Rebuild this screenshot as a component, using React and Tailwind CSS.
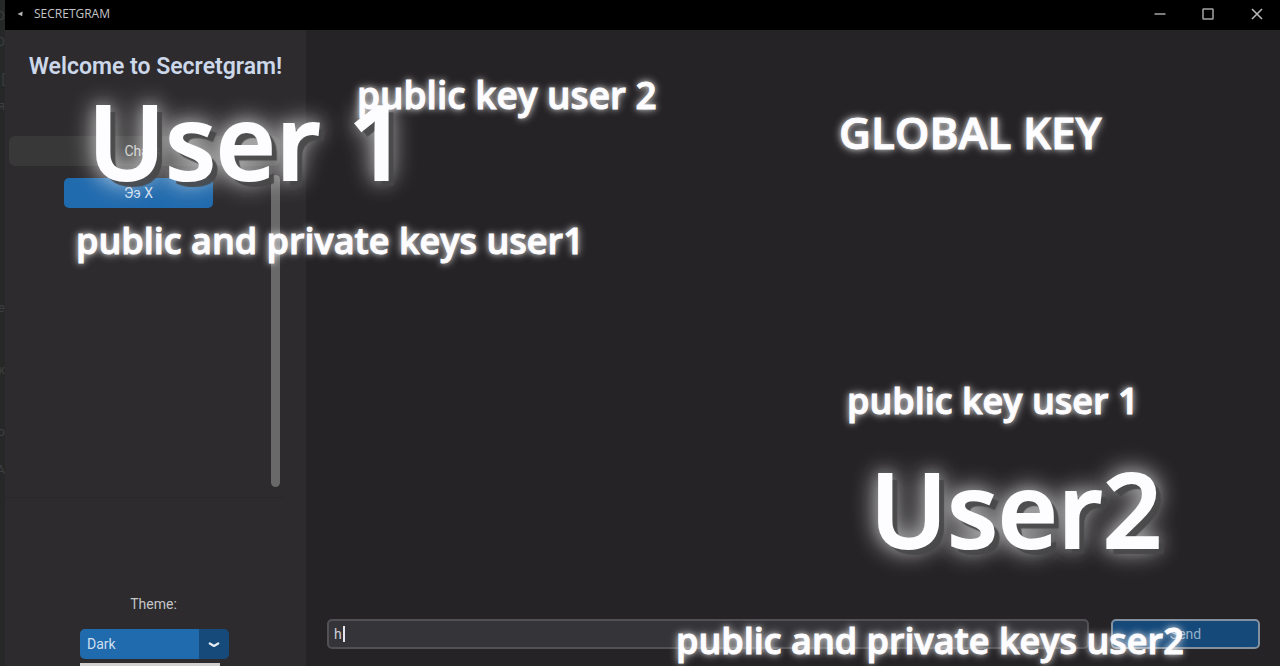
import { useState } from "react";

const backdropLetters = [
  { char: "O", gap: "mt-[8px]" },
  { char: "O", gap: "mt-[10px]" },
  { char: "[", gap: "mt-[22px]" },
  { char: "я", gap: "mt-[10px]" },
  { char: "e", gap: "mt-[186px]" },
  { char: "ж", gap: "mt-[46px]" },
  { char: "o", gap: "mt-[46px]" },
  { char: "A", gap: "mt-[22px]" },
];

function Backdrop() {
  return (
    <div
      aria-hidden="true"
      className="flex w-[5px] shrink-0 flex-col items-end overflow-hidden bg-[#252827] text-[13px] leading-4 text-[#3b3f41]"
    >
      {backdropLetters.map((l, i) => (
        <span key={i} className={l.gap}>{l.char}</span>
      ))}
    </div>
  );
}

function TitleBar() {
  return (
    <header className="flex h-[30px] shrink-0 items-center bg-black pb-[2px] pl-3">
      <svg width="6" height="6" viewBox="0 0 6 6" className="mr-[11px]" aria-hidden="true">
        <path d="M0.5 3 L5.6 0.6 L5.2 5.2 L3.4 4.2 Z" fill="#b8b8b8" />
      </svg>
      <h1 className="flex-1 font-['Open_Sans',sans-serif] text-[12px] leading-4 text-[#c4c4c8]">SECRETGRAM</h1>
      <button aria-label="Minimize" className="flex h-7 w-[44px] items-center justify-center">
        <svg width="12" height="12" viewBox="0 0 12 12" stroke="#9c9c9c" strokeWidth="1.6"><path d="M0.5 6H11.5" /></svg>
      </button>
      <button aria-label="Maximize" className="flex h-7 w-[52px] items-center justify-center">
        <svg width="12" height="12" viewBox="0 0 12 12" fill="none" stroke="#a4a4a4" strokeWidth="1.5"><rect x="1" y="1" width="10" height="10" rx="0.6" /></svg>
      </button>
      <button aria-label="Close" className="flex h-7 w-[46px] items-center justify-center">
        <svg width="12" height="12" viewBox="0 0 12 12" stroke="#bcbcbc" strokeWidth="1.5"><path d="M1 1L11 11M11 1L1 11" /></svg>
      </button>
    </header>
  );
}

function Sidebar({ theme, setTheme }) {
  return (
    <aside className="flex w-[301px] shrink-0 flex-col bg-[#2d2b2d]">
      <h2 className="mt-[25px] whitespace-nowrap text-center text-[23px] font-semibold leading-6 text-[#ccd7ea]">Welcome to Secretgram!</h2>
      <section className="mr-[21px] mt-[51px] flex h-[368px] flex-col border-b border-[#292729] pl-1 pr-[5px]">
        <h3 className="mt-[6px] h-[30px] shrink-0 rounded-md bg-[#383838] pr-1 text-center text-[14px] leading-[30px] text-[#c8c8c8]">
          Chats
        </h3>
        <div className="mt-[9px] flex h-[312px] justify-between">
          <div className="flex flex-1 justify-center pr-[3px]">
            <button className="mt-[3px] h-[30px] w-[149px] rounded-[5px] bg-[#206aae] text-[14px] text-[#cfdfee]">Ээ Х</button>
          </div>
          <div className="w-[9px] rounded-full bg-[#696969]" />
        </div>
      </section>
      <div className="mt-auto flex flex-col">
        <label htmlFor="theme" className="mr-1 self-center text-[14px] leading-4 text-[#c4c6ca]">Theme:</label>
        <div className="ml-[75px] mt-[17px] grid w-[149px] grid-cols-[1fr_30px]">
          <select
            id="theme"
            value={theme}
            onChange={(e) => setTheme(e.target.value)}
            className="col-span-2 col-start-1 row-start-1 h-[30px] appearance-none rounded-[5px] bg-[linear-gradient(to_right,#206aae_119px,#164a7a_119px)] pl-[7px] text-[14px] text-[#cfdfee] outline-none"
          >
            <option>Dark</option>
            <option>Light</option>
            <option>System</option>
          </select>
          <svg width="12" height="8" viewBox="0 0 12 8" className="pointer-events-none col-start-2 row-start-1 self-center justify-self-center" aria-hidden="true">
            <path d="M1.8 3.4L6 5.9L10.2 3.4" fill="none" stroke="#e2ebf3" strokeWidth="2.3" strokeLinecap="round" strokeLinejoin="round" />
          </svg>
        </div>
        <div className="ml-[75px] mt-1 h-[3px] w-[140px] bg-[#d2d0ce]" />
      </div>
    </aside>
  );
}

function Conversation() {
  const [draft, setDraft] = useState("h");
  return (
    <main className="flex min-w-0 flex-1 flex-col bg-[#252326]">
      <div className="flex-1" />
      <form className="mb-[17px] ml-[21px] mr-5 flex gap-[22px]" onSubmit={(e) => e.preventDefault()}>
        <div className="flex h-[30px] min-w-0 flex-1 items-center rounded-[5px] border-2 border-[#515153] bg-[#353438] pl-[5px]">
          <input
            aria-label="Message"
            value={draft}
            onChange={(e) => setDraft(e.target.value)}
            className="w-[9px] bg-transparent text-[14px] text-[#cdd0da] outline-none"
          />
          <span className="h-4 w-[2px] bg-[#e4e4ee]" aria-hidden="true" />
        </div>
        <button className="h-[30px] w-[149px] rounded-[5px] border-2 border-[#8290a0] bg-[#15497a] text-[14px] text-[#94afc8]">Send</button>
      </form>
    </main>
  );
}

const glow =
  "absolute whitespace-nowrap leading-[48px] [-webkit-text-stroke:1px_#fdfcff] [text-shadow:0_0_4px_#ffffff50,0_0_6px_#ffffff60,0_0_9px_#ffffff70,0_0_11px_#ffffff60]";
const big =
  "absolute whitespace-nowrap text-[104px] leading-[128px] [-webkit-text-stroke:2px_#fdfcff] [text-shadow:6px_6px_1px_#464647e6,0_0_14px_#ffffff40,0_0_20px_#ffffff60,0_0_26px_#ffffff70,0_0_30px_#ffffff70]";

function Captions() {
  return (
    <div className="pointer-events-none absolute inset-0 overflow-hidden font-['Open_Sans',sans-serif] font-semibold text-[#fdfcff]">
      <p className={`${glow} left-[357px] top-[71px] text-[37px]`}>public key user 2</p>
      <p className={`${big} left-[88px] top-[76px]`}>User 1</p>
      <p className={`${glow} left-[76px] top-[217px] text-[36px]`}>public and private keys user1</p>
      <p className={`${glow} left-[839px] top-[108px] text-[44px]`}>GLOBAL KEY</p>
      <p className={`${glow} left-[847px] top-[377px] text-[36px]`}>public key user 1</p>
      <p className={`${big} left-[870px] top-[444px]`}>User2</p>
      <p className={`${glow} left-[676px] top-[617px] text-[36px]`}>public and private keys user2</p>
    </div>
  );
}

export default function App() {
  const [theme, setTheme] = useState("Dark");
  return (
    <div className="relative flex min-h-screen font-['Roboto',sans-serif]">
      <Backdrop />
      <div className="flex min-w-0 flex-1 flex-col">
        <TitleBar />
        <div className="flex flex-1">
          <Sidebar theme={theme} setTheme={setTheme} />
          <Conversation />
        </div>
      </div>
      <Captions />
    </div>
  );
}
